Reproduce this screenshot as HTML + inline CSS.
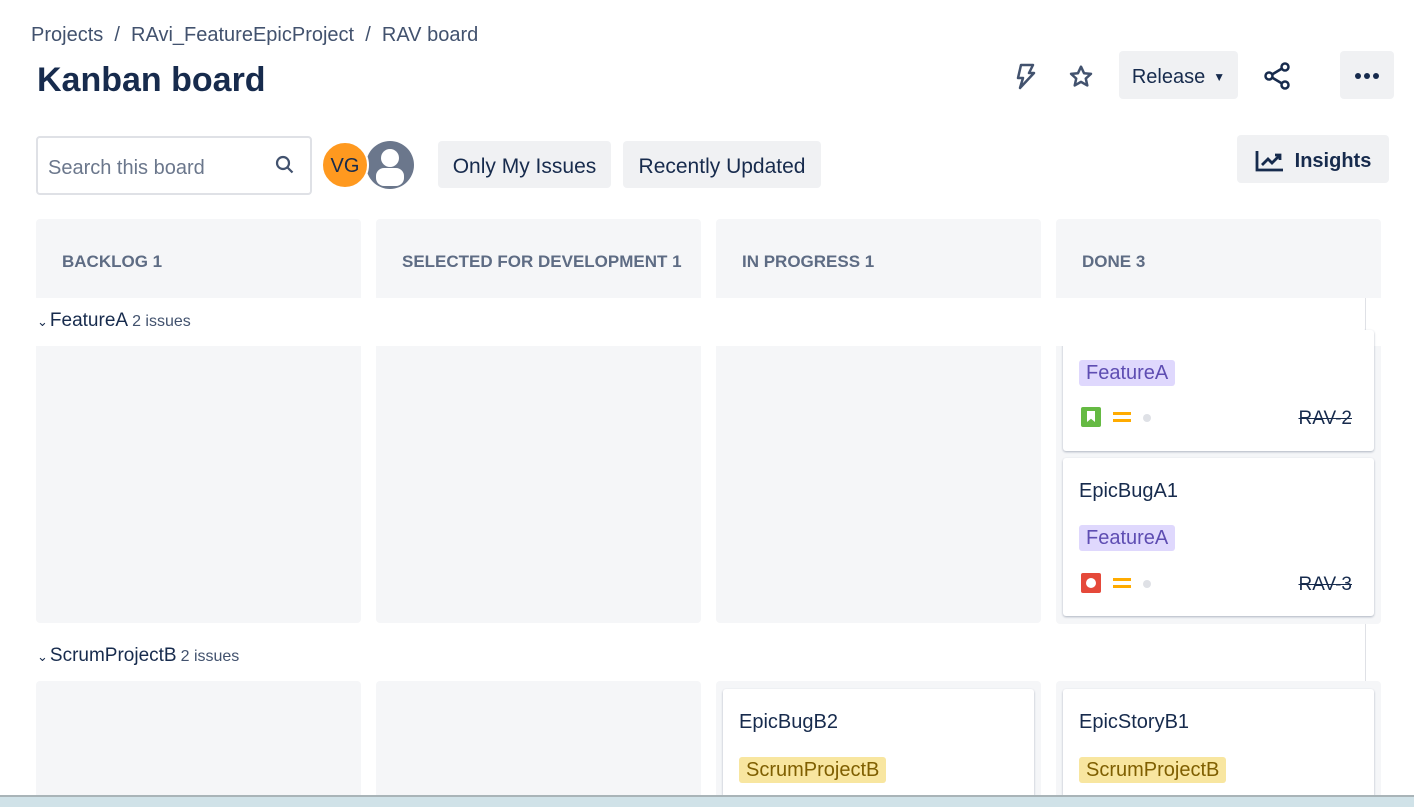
<!DOCTYPE html>
<html style="overflow:hidden;height:807px"><head><style>
*{box-sizing:border-box;margin:0;padding:0}
body{width:1414px;height:807px;overflow:hidden;background:#fff;font-family:"Liberation Sans","DejaVu Sans",sans-serif;color:#172b4d;position:relative}
.a{position:absolute}
.crumb{left:31px;top:24px;font-size:20px;color:#42526e}
h1{position:absolute;left:37px;top:61px;font-size:34px;font-weight:bold;color:#172b4d}
.btn{position:absolute;background:#f0f1f3;border-radius:4px;font-size:20px;color:#172b4d;display:flex;align-items:center;justify-content:center;padding-top:4px}
.col{position:absolute;background:#f5f6f8;width:325px}
.hd{font-size:17px;font-weight:bold;color:#5e6c84;padding-left:26px;line-height:86px}
.card{position:absolute;background:#fff;border-radius:3px;box-shadow:0 1px 2px rgba(9,30,66,.3);left:1063px;width:311px}
.tit{position:absolute;left:16px;font-size:20px;color:#172b4d}
.lab{position:absolute;left:16px;font-size:20px;padding:0 7px;border-radius:3px;line-height:26px}
.fa{background:#dfd8fd;color:#5e4db2}
.sb{background:#f8e6a0;color:#7f5f01}
.key{position:absolute;right:22px;font-size:19px;text-decoration:line-through;color:#172b4d}
.pr{position:absolute;left:50px;width:18px;height:3px;background:#ffab00;box-shadow:0 7px 0 #ffab00}
.dot{position:absolute;left:80px;width:8px;height:8px;border-radius:50%;background:#dfe1e6}
.lane{position:absolute;left:37px;font-size:19px;color:#172b4d}
.lane span{font-size:16px;color:#42526e;margin-left:4px}
</style></head><body>
<div class="a crumb">Projects &nbsp;/&nbsp; RAvi_FeatureEpicProject &nbsp;/&nbsp; RAV board</div>
<h1>Kanban board</h1>
<svg class="a" style="left:1012px;top:62px" width="26" height="28" viewBox="0 0 26 28"><path d="M9 3h12l-4 8h5L8 26l3-10H6z" fill="none" stroke="#42526e" stroke-width="2.5" stroke-linejoin="round"/></svg>
<svg class="a" style="left:1068px;top:64px" width="26" height="26" viewBox="0 0 24 24"><path d="M12 2.5l2.8 6 6.4.6-4.8 4.3 1.4 6.4L12 16.5l-5.8 3.3 1.4-6.4L2.8 9.1l6.4-.6z" fill="none" stroke="#42526e" stroke-width="2.3" stroke-linejoin="round"/></svg>
<div class="btn" style="left:1119px;top:51px;width:119px;height:48px">Release <span style="font-size:12px;margin-left:8px">&#9660;</span></div>
<svg class="a" style="left:1262px;top:61px" width="30" height="30" viewBox="0 0 30 30"><circle cx="23" cy="6" r="3.5" fill="none" stroke="#172b4d" stroke-width="2.5"/><circle cx="7" cy="15" r="3.5" fill="none" stroke="#172b4d" stroke-width="2.5"/><circle cx="23" cy="24" r="3.5" fill="none" stroke="#172b4d" stroke-width="2.5"/><path d="M10 13.5l10-6M10 16.5l10 6" stroke="#172b4d" stroke-width="2.5"/></svg>
<div class="a" style="left:1340px;top:51px;width:54px;height:48px;background:#f0f1f3;border-radius:4px"><div class="a" style="left:15px;top:22px;width:6px;height:6px;border-radius:50%;background:#172b4d;box-shadow:9px 0 0 #172b4d,18px 0 0 #172b4d"></div></div>
<div class="a" style="left:36px;top:136px;width:276px;height:59px;border:2px solid #dfe1e6;border-radius:4px;font-size:20px;color:#6b778c;padding:19px 10px 0">Search this board</div>
<svg class="a" style="left:274px;top:154px" width="22" height="22" viewBox="0 0 22 22"><circle cx="9" cy="9" r="6" fill="none" stroke="#42526e" stroke-width="2.2"/><path d="M13.5 13.5l5 5" stroke="#42526e" stroke-width="2.2"/></svg>
<div class="a" style="left:366px;top:141px;width:48px;height:48px;border-radius:50%;background:#6b778c;overflow:hidden"><div class="a" style="left:15px;top:8px;width:18px;height:18px;border-radius:50%;background:#fff"></div><div class="a" style="left:10px;top:27px;width:28px;height:18px;border-radius:8px;background:#fff"></div></div>
<div class="a" style="left:321px;top:141px;width:48px;height:48px;border-radius:50%;background:#ff991f;border:2px solid #fff;font-size:20px;text-align:center;line-height:46px;color:#172b4d">VG</div>
<div class="btn" style="left:438px;top:141px;width:173px;height:47px;font-size:21px">Only My Issues</div>
<div class="btn" style="left:623px;top:141px;width:198px;height:47px;font-size:21px">Recently Updated</div>
<div class="btn" style="left:1237px;top:135px;width:152px;height:48px;font-weight:bold"><svg width="30" height="24" viewBox="0 0 30 24" style="margin-right:10px"><path d="M2 2v19h26" fill="none" stroke="#172b4d" stroke-width="2.8"/><path d="M7 16l6-6 4 4 8-8M20 6h5v5" fill="none" stroke="#172b4d" stroke-width="2.8"/></svg>Insights</div>

<div class="col" style="left:36px;top:219px;height:79px;border-radius:4px 4px 0 0"><div class="hd">BACKLOG 1</div></div>
<div class="col" style="left:376px;top:219px;height:79px;border-radius:4px 4px 0 0"><div class="hd">SELECTED FOR DEVELOPMENT 1</div></div>
<div class="col" style="left:716px;top:219px;height:79px;border-radius:4px 4px 0 0"><div class="hd">IN PROGRESS 1</div></div>
<div class="col" style="left:1056px;top:219px;height:79px;border-radius:4px 4px 0 0"><div class="hd">DONE 3</div></div>

<div class="a" style="left:1365px;top:298px;width:1px;height:48px;background:#dfe1e6"></div>
<div class="a" style="left:1365px;top:623px;width:1px;height:58px;background:#dfe1e6"></div>
<div class="lane" style="top:310px"><span style="font-size:13px;margin:0 2px 0 0;color:#172b4d">&#8964;</span>FeatureA<span>2 issues</span></div>
<div class="col" style="left:36px;top:346px;height:277px;border-radius:0 0 4px 4px"></div>
<div class="col" style="left:376px;top:346px;height:277px;border-radius:0 0 4px 4px"></div>
<div class="col" style="left:716px;top:346px;height:277px;border-radius:0 0 4px 4px"></div>
<div class="col" style="left:1056px;top:346px;height:278px;border-radius:0 0 4px 4px"></div>
<div class="card" style="top:330px;height:121px">
<div class="lab fa" style="top:30px">FeatureA</div>
<div class="a" style="left:18px;top:77px;width:20px;height:20px;background:#65ba43;border-radius:2px"><div class="a" style="left:6px;top:4px;width:8px;height:11px;background:#fff;clip-path:polygon(0 0,100% 0,100% 100%,50% 70%,0 100%)"></div></div>
<div class="pr" style="top:82px"></div><div class="dot" style="top:84px"></div>
<div class="key" style="top:78px">RAV-2</div></div>
<div class="a" style="left:1056px;top:326px;width:308px;height:20px;background:#fff;z-index:2"></div>
<div class="card" style="top:458px;height:158px">
<div class="tit" style="top:22px">EpicBugA1</div>
<div class="lab fa" style="top:67px">FeatureA</div>
<div class="a" style="left:18px;top:115px;width:20px;height:20px;background:#e5493a;border-radius:2px"><div class="a" style="left:5px;top:5px;width:10px;height:10px;background:#fff;border-radius:50%"></div></div>
<div class="pr" style="top:120px"></div><div class="dot" style="top:122px"></div>
<div class="key" style="top:116px">RAV-3</div></div>

<div class="lane" style="top:645px"><span style="font-size:13px;margin:0 2px 0 0;color:#172b4d">&#8964;</span>ScrumProjectB<span>2 issues</span></div>
<div class="col" style="left:36px;top:681px;height:114px;border-radius:4px 4px 0 0"></div>
<div class="col" style="left:376px;top:681px;height:114px;border-radius:4px 4px 0 0"></div>
<div class="col" style="left:716px;top:681px;height:114px;border-radius:4px 4px 0 0"></div>
<div class="col" style="left:1056px;top:681px;height:114px;border-radius:4px 4px 0 0"></div>
<div class="card" style="left:723px;top:689px;height:106px;border-radius:3px 3px 0 0"><div class="tit" style="top:22px">EpicBugB2</div><div class="lab sb" style="top:68px">ScrumProjectB</div></div>
<div class="card" style="top:689px;height:106px;border-radius:3px 3px 0 0"><div class="tit" style="top:22px">EpicStoryB1</div><div class="lab sb" style="top:68px">ScrumProjectB</div></div>
<div class="a" style="left:0;top:795px;width:1414px;height:12px;background:#d0e2e8;border-top:2px solid #a9b4b8;z-index:5"></div>
</body></html>
